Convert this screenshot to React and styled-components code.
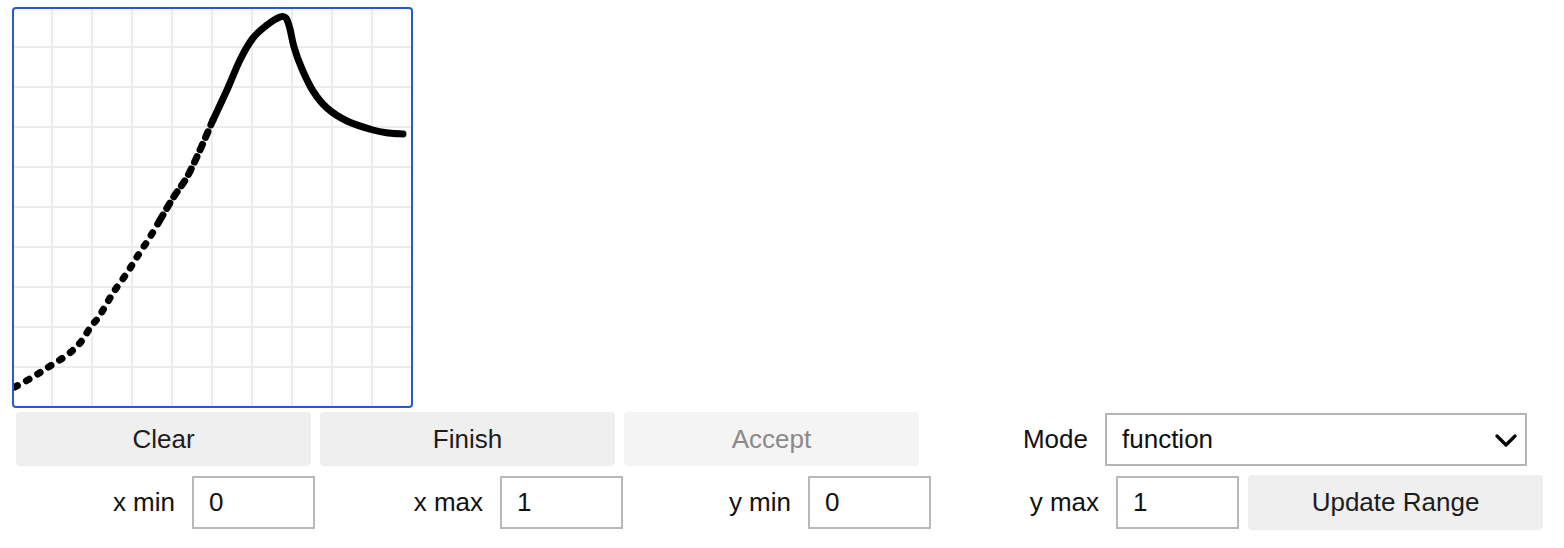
import React from "react";
import styled, { createGlobalStyle } from "styled-components";

const Global = createGlobalStyle`
  html, body { margin: 0; padding: 0; background: #fff; }
  body { font-family: "Liberation Sans", Arial, sans-serif; color: #111; }
`;

const Page = styled.div`
  padding: 7px 0 0 0;
  width: 1564px;
  height: 548px;
  box-sizing: border-box;
`;

const CanvasBox = styled.div`
  margin-left: 12px;
  width: 401px;
  height: 401px;
  box-sizing: border-box;
  border: 2px solid #235bd2;
  border-radius: 4px;
  overflow: hidden;
  background: #fff;
  svg { display: block; }
`;

const ButtonRow = styled.div`
  display: grid;
  grid-template-columns: 295px 295px 295px 1fr;
  column-gap: 9px;
  margin: 4px 0 0 16px;
  width: 1511px;
  height: 54px;
`;

const Btn = styled.button`
  font-family: "Liberation Sans", Arial, sans-serif;
  font-size: 26px;
  height: ${(p) => p.$h || 54}px;
  border: none;
  border-radius: 4px;
  background: ${(p) => (p.disabled ? "#f4f4f4" : "#efefef")};
  color: ${(p) => (p.disabled ? "#8a8a8a" : "#1c1c1c")};
  padding: 0;
  margin: 0;
`;

const Field = styled.label`
  display: flex;
  align-items: center;
  justify-content: flex-end;
  gap: 17px;
  font-size: 26px;
  color: #111;
`;

const SelectWrap = styled.div`
  position: relative;
  width: 422px;
  height: 53px;
`;

const Select = styled.select`
  appearance: none;
  -webkit-appearance: none;
  width: 100%;
  height: 100%;
  box-sizing: border-box;
  border: 2px solid #b5b5b5;
  border-radius: 0;
  background: #fff;
  font-family: "Liberation Sans", Arial, sans-serif;
  font-size: 26px;
  color: #111;
  padding: 0 0 0 15px;
  margin: 0;
`;

const Chevron = styled.svg`
  position: absolute;
  right: 10px;
  top: 21px;
  pointer-events: none;
`;

const RangeRow = styled.div`
  display: grid;
  grid-template-columns: repeat(4, 308px) 303px;
  column-gap: 0;
  margin: 9px 0 0 8px;
  height: 55px;
  align-items: center;
  & > button { margin-left: 8px; }
`;

const NumInput = styled.input`
  width: 123px;
  height: 53px;
  box-sizing: border-box;
  border: 2px solid #b8b8b8;
  border-radius: 0;
  font-family: "Liberation Sans", Arial, sans-serif;
  font-size: 26px;
  color: #111;
  padding: 0 0 0 15px;
  margin: 0 1px 0 0;
  outline: none;
`;

const pts = [
  [1, 378], [19, 368], [33, 359], [53, 346], [66, 334], [76, 319], [86, 306],
  [99, 284], [113, 264], [123, 248], [136, 228], [146, 211], [159, 189],
  [173, 168], [186, 141], [199, 111], [213, 81], [226, 51], [239, 29],
  [253, 16], [266, 8], [272, 9], [276, 20], [280, 38], [288, 60], [299, 82],
  [313, 99], [333, 112], [359, 121], [375, 124], [389, 125],
];

function smooth(p) {
  let d = `M${p[0][0]} ${p[0][1]}`;
  for (let i = 0; i < p.length - 1; i++) {
    const p0 = p[i - 1] || p[i];
    const p1 = p[i];
    const p2 = p[i + 1];
    const p3 = p[i + 2] || p2;
    const c1x = p1[0] + (p2[0] - p0[0]) / 6;
    const c1y = p1[1] + (p2[1] - p0[1]) / 6;
    const c2x = p2[0] - (p3[0] - p1[0]) / 6;
    const c2y = p2[1] - (p3[1] - p1[1]) / 6;
    d += ` C${c1x.toFixed(1)} ${c1y.toFixed(1)} ${c2x.toFixed(1)} ${c2y.toFixed(1)} ${p2[0]} ${p2[1]}`;
  }
  return d;
}

const splitA = 11;
const splitB = 15;
const lower = smooth(pts.slice(0, splitA + 1));
const middle = smooth(pts.slice(splitA, splitB + 1));
const upper = smooth(pts.slice(splitB));

function Sketch() {
  const lines = [];
  for (let i = 0; i < 10; i++) {
    const v = 38 + i * 40;
    lines.push(<line key={"v" + i} x1={v} y1={0} x2={v} y2={400} />);
    lines.push(<line key={"h" + i} x1={0} y1={v} x2={400} y2={v} />);
  }
  return (
    <svg width="397" height="397" viewBox="0 0 397 397">
      <g stroke="#ececec" strokeWidth="2">{lines}</g>
      <g fill="none" stroke="#000" strokeWidth="7" strokeLinecap="round" strokeLinejoin="round">
        <path d={lower} strokeDasharray="3 10" />
        <path d={middle} strokeDasharray="6 7.5" />
        <path d={upper} />
      </g>
    </svg>
  );
}

export default function App() {
  return (
    <Page>
      <Global />
      <CanvasBox>
        <Sketch />
      </CanvasBox>
      <ButtonRow>
        <Btn>Clear</Btn>
        <Btn>Finish</Btn>
        <Btn disabled>Accept</Btn>
        <Field as="div">
          <span>Mode</span>
          <SelectWrap>
            <Select defaultValue="function">
              <option value="function">function</option>
              <option value="parametric">parametric</option>
            </Select>
            <Chevron width="22" height="13" viewBox="0 0 22 13">
              <path d="M2 2 L11 11 L20 2" fill="none" stroke="#000" strokeWidth="3.2" strokeLinecap="round" strokeLinejoin="round" />
            </Chevron>
          </SelectWrap>
        </Field>
      </ButtonRow>
      <RangeRow>
        <Field>
          <span>x min</span>
          <NumInput defaultValue="0" />
        </Field>
        <Field>
          <span>x max</span>
          <NumInput defaultValue="1" />
        </Field>
        <Field>
          <span>y min</span>
          <NumInput defaultValue="0" />
        </Field>
        <Field>
          <span>y max</span>
          <NumInput defaultValue="1" />
        </Field>
        <Btn $h={55}>Update Range</Btn>
      </RangeRow>
    </Page>
  );
}
